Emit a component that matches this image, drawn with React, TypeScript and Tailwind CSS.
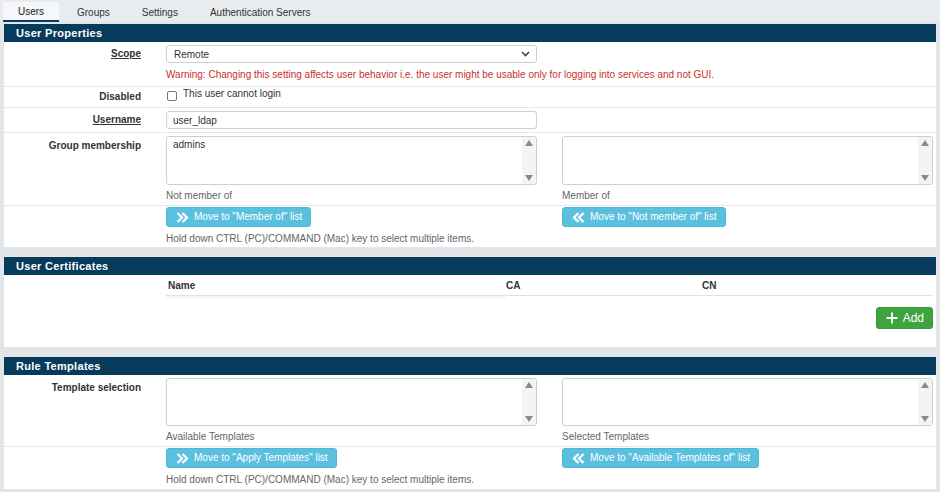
import React from "react"

const tabs = ["Users", "Groups", "Settings", "Authentication Servers"]

function Chevrons({ left }: { left?: boolean }) {
  return (
    <svg width="13" height="11" viewBox="0 0 13 11" className="shrink-0">
      <path
        d={left ? "M6.5 1 L2 5.5 L6.5 10 M11.5 1 L7 5.5 L11.5 10" : "M1.5 1 L6 5.5 L1.5 10 M6.5 1 L11 5.5 L6.5 10"}
        fill="none"
        stroke="white"
        strokeWidth="2.2"
      />
    </svg>
  )
}

function MoveButton({ text, left }: { text: string; left?: boolean }) {
  return (
    <button className="flex items-center gap-[5px] h-[20px] pl-[9px] pr-[8px] rounded-[3px] bg-[#5bc0de] border border-[#4fb7d8] text-white text-[10px] leading-none">
      <Chevrons left={left} />
      <span>{text}</span>
    </button>
  )
}

function ListBox({ items = [] as string[], h = "h-[49px]" }) {
  return (
    <div className={`flex ${h} rounded-[3px] border border-[#cfcfcf] bg-white overflow-hidden`}>
      <div className="flex-1 pl-[6px] pt-[2px] text-[10px] leading-[12px] text-[#333]">
        {items.map((i) => (
          <div key={i}>{i}</div>
        ))}
      </div>
      <div className="w-[14px] bg-[#f4f4f4] flex flex-col justify-between items-center py-[3px]">
        <svg width="8" height="6" viewBox="0 0 8 6">
          <path d="M0 6 L4 0 L8 6 Z" fill="#8a8a8a" />
        </svg>
        <svg width="8" height="6" viewBox="0 0 8 6">
          <path d="M0 0 L4 6 L8 0 Z" fill="#8a8a8a" />
        </svg>
      </div>
    </div>
  )
}

function Row({
  label,
  underline,
  className = "",
  labelClass = "",
  children,
}: {
  label?: string
  underline?: boolean
  className?: string
  labelClass?: string
  children: React.ReactNode
}) {
  return (
    <div className={`flex border-b border-[#e8e8e8] ${className}`}>
      <div className={`w-[162px] shrink-0 pr-[25px] text-right font-bold text-[#333] ${labelClass}`}>
        <span className={underline ? "underline" : ""}>{label}</span>
      </div>
      <div className="flex-1 pr-[3px]">{children}</div>
    </div>
  )
}

function Header({ title }: { title: string }) {
  return (
    <div className="h-[18px] bg-[#073b5c] text-white font-bold text-[11px] leading-[18px] pl-[12px] tracking-[0.3px]">
      {title}
    </div>
  )
}

function DualList({
  label,
  leftItems,
  leftCaption,
  rightCaption,
  leftBtn,
  rightBtn,
  listH,
  rowH,
  btnH,
}: {
  label: string
  leftItems?: string[]
  leftCaption: string
  rightCaption: string
  leftBtn: string
  rightBtn: string
  listH: string
  rowH: string
  btnH: string
}) {
  return (
    <>
      <Row label={label} className={`${rowH} pt-[3px]`} labelClass="pt-[4px] leading-[12px]">
        <div className="grid grid-cols-2 gap-[25px]">
          <div>
            <ListBox items={leftItems} h={listH} />
            <div className="text-[#666] mt-[5px] leading-[12px]">{leftCaption}</div>
          </div>
          <div>
            <ListBox h={listH} />
            <div className="text-[#666] mt-[5px] leading-[12px]">{rightCaption}</div>
          </div>
        </div>
      </Row>
      <div className={`flex ${btnH} pt-[1px]`}>
        <div className="w-[162px] shrink-0" />
        <div className="flex-1 pr-[3px]">
          <div className="grid grid-cols-2 gap-[25px]">
            <div className="flex">
              <MoveButton text={leftBtn} />
            </div>
            <div className="flex">
              <MoveButton text={rightBtn} left />
            </div>
          </div>
          <div className="text-[#666] mt-[6px] leading-[12px]">
            Hold down CTRL (PC)/COMMAND (Mac) key to select multiple items.
          </div>
        </div>
      </div>
    </>
  )
}

export default function App() {
  return (
    <div className="w-[940px] h-[492px] overflow-hidden bg-[#e3e6e9] font-['Liberation_Sans',Arial,sans-serif] text-[10px] text-[#333]">
      <div className="flex h-[22px] pt-[2px] pl-[3px] bg-[#e9ecef]">
        {tabs.map((t, i) => (
          <div
            key={t}
            className={
              i === 0
                ? "w-[56px] flex items-center justify-center bg-[#f6f7f8] border-b-2 border-[#073b5c] text-[#222]"
                : i === 1
                  ? "ml-[2px] px-[16px] flex items-center text-[#333]"
                  : "px-[16px] flex items-center text-[#333]"
            }
          >
            {t}
          </div>
        ))}
      </div>

      <div className="flex flex-col gap-[10px] px-[4px] pt-[2px]">
        <section className="bg-white">
          <Header title="User Properties" />
          <Row label="Scope" underline className="h-[45px] pt-[3px]" labelClass="leading-[18px]">
            <div className="w-[371px] h-[18px] flex items-center justify-between rounded-[3px] border border-[#cfcfcf] pl-[7px] pr-[6px]">
              <span>Remote</span>
              <svg width="9" height="6" viewBox="0 0 9 6">
                <path d="M1 1 L4.5 4.5 L8 1" fill="none" stroke="#444" strokeWidth="1.6" />
              </svg>
            </div>
            <div className="text-[#c9302c] mt-[6px] leading-[12px]">
              Warning: Changing this setting affects user behavior i.e. the user might be usable only for logging into
              services and not GUI.
            </div>
          </Row>
          <Row label="Disabled" className="h-[21px]" labelClass="leading-[12px] pt-[4px]">
            <label className="flex items-start gap-[6px]">
              <span className="w-[10px] h-[10px] mt-[4px] ml-[1px] rounded-[2px] border border-[#767676] bg-white" />
              <span className="leading-[12px] pt-[1px]">This user cannot login</span>
            </label>
          </Row>
          <Row label="Username" underline className="h-[25px] pt-[3px]" labelClass="leading-[18px]">
            <div className="w-[371px] h-[18px] flex items-center rounded-[3px] border border-[#cfcfcf] pl-[6px]">
              user_ldap
            </div>
          </Row>
          <DualList
            label="Group membership"
            leftItems={["admins"]}
            leftCaption="Not member of"
            rightCaption="Member of"
            leftBtn={'Move to "Member of" list'}
            rightBtn={'Move to "Not member of" list'}
            listH="h-[49px]"
            rowH="h-[73px]"
            btnH="h-[41px]"
          />
        </section>

        <section className="bg-white h-[90px]">
          <Header title="User Certificates" />
          <div className="pl-[162px] pr-[3px]">
            <div className="flex font-bold h-[21px] items-center border-b border-[#e2e2e2] pl-[2px]">
              <div className="w-[338px]">Name</div>
              <div className="w-[196px]">CA</div>
              <div>CN</div>
            </div>
            <div className="w-[340px] h-[3px] bg-[#f7f7f7]" />
            <div className="flex justify-end mt-[8px]">
              <button className="flex items-center gap-[5px] h-[22px] pl-[9px] pr-[8px] rounded-[3px] bg-[#3fa33f] border border-[#389538] text-white text-[12px]">
                <svg width="12" height="12" viewBox="0 0 12 12">
                  <path d="M6 0.5 V11.5 M0.5 6 H11.5" stroke="white" strokeWidth="1.8" />
                </svg>
                Add
              </button>
            </div>
          </div>
        </section>

        <section className="bg-white">
          <Header title="Rule Templates" />
          <DualList
            label="Template selection"
            leftCaption="Available Templates"
            rightCaption="Selected Templates"
            leftBtn={'Move to "Apply Templates" list'}
            rightBtn={'Move to "Available Templates of" list'}
            listH="h-[48px]"
            rowH="h-[72px]"
            btnH="h-[42px]"
          />
        </section>
      </div>
    </div>
  )
}
